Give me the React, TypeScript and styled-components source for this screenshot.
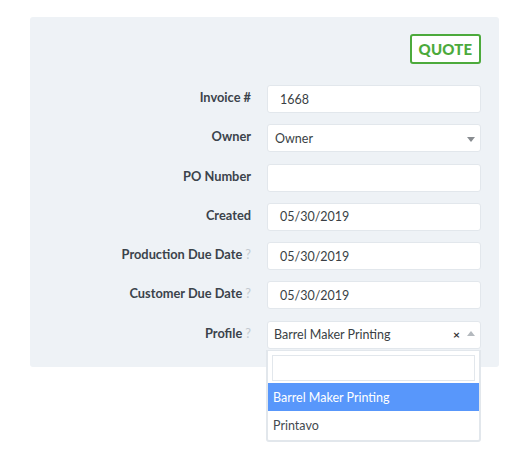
import React, { useState } from 'react';
import styled, { createGlobalStyle } from 'styled-components';

const GlobalStyle = createGlobalStyle`
	html, body {
		margin: 0;
		padding: 0;
		background: #ffffff;
		font-family: Lato, 'Liberation Sans', sans-serif;
	}
`;

const Page = styled.div`
	min-height: 100vh;
	box-sizing: border-box;
	padding: 17px 0 0 30px;
`;

const Panel = styled.div`
	position: relative;
	width: 469px;
	box-sizing: border-box;
	padding: 17px 18px 18px 0;
	background-color: #eef2f6;
	border-radius: 3px;
`;

const Toolbar = styled.div`
	display: flex;
	justify-content: flex-end;
	margin-bottom: 21px;
`;

const QuoteBadge = styled.button`
	width: 71px;
	height: 30px;
	box-sizing: border-box;
	border: 2px solid #4caa3c;
	border-radius: 3px;
	background: #ffffff;
	color: #4caa3c;
	font-family: Lato, 'Liberation Sans', sans-serif;
	font-weight: 900;
	font-size: 15px;
	letter-spacing: 0.2px;
	padding: 0;
`;

const Form = styled.div`
	display: grid;
	grid-template-columns: 1fr 214px;
	column-gap: 16px;
	row-gap: 11.3px;
`;

const Label = styled.label`
	display: flex;
	justify-content: flex-end;
	align-items: center;
	height: 28px;
	padding-bottom: 4px;
	box-sizing: border-box;
	font-size: 12.8px;
	font-weight: 700;
	color: #3b434b;
`;

const Hint = styled.span`
	margin-left: 3px;
	color: #c3c9cf;
	font-weight: 400;
`;

const Field = styled.div<{ $inset?: number }>`
	position: relative;
	height: 28px;
	box-sizing: border-box;
	display: flex;
	align-items: center;
	padding-left: ${(p) => p.$inset ?? 12}px;
	padding-right: 5px;
	background: #ffffff;
	border: 1px solid #e2e7ec;
	border-radius: 3px;
	font-size: 12.5px;
	color: #3a3f45;
`;

const Value = styled.span`
	flex: 1;
`;

const Caret = styled.span<{ $up?: boolean }>`
	width: 0;
	height: 0;
	border-left: 4px solid transparent;
	border-right: 4px solid transparent;
	${(p) =>
		p.$up
			? 'border-bottom: 5px solid #b4b9be; margin-top: -2px;'
			: 'border-top: 5px solid #888c90; margin-top: 2px;'}
`;

const Clear = styled.span`
	margin-right: 7px;
	font-size: 12px;
	font-weight: 700;
	color: #333;
	line-height: 1;
`;

const Dropdown = styled.div`
	position: absolute;
	left: -2px;
	right: -1px;
	top: 28px;
	background: #ffffff;
	border: 2px solid #e2e7ec;
	border-top: 1px solid #e2e7ec;
	border-radius: 0 0 3px 3px;
	z-index: 10;
`;

const SearchBox = styled.div`
	padding: 4px 4px 2px;
`;

const SearchInput = styled.input`
	display: block;
	width: 100%;
	height: 26px;
	box-sizing: border-box;
	border: 1px solid #e2e7ec;
	outline: none;
`;

const Option = styled.div<{ $active?: boolean }>`
	height: 28.5px;
	display: flex;
	align-items: center;
	padding-left: 5px;
	font-size: 12.5px;
	color: ${(p) => (p.$active ? '#ffffff' : '#444a50')};
	background: ${(p) => (p.$active ? '#5897fb' : 'transparent')};
`;

const rows = [
	{ label: 'Invoice #', value: '1668' },
	{ label: 'Owner', value: 'Owner', select: true },
	{ label: 'PO Number', value: '' },
	{ label: 'Created', value: '05/30/2019' },
	{ label: 'Production Due Date', value: '05/30/2019', hint: true },
	{ label: 'Customer Due Date', value: '05/30/2019', hint: true },
];

const profiles = ['Barrel Maker Printing', 'Printavo'];

export default function App() {
	const [profile, setProfile] = useState(profiles[0]);

	return (
		<Page>
			<GlobalStyle />
			<Panel>
				<Toolbar>
					<QuoteBadge type='button'>QUOTE</QuoteBadge>
				</Toolbar>
				<Form>
					{rows.map((row) => (
						<React.Fragment key={row.label}>
							<Label>
								{row.label}
								{row.hint && <Hint>?</Hint>}
							</Label>
							<Field $inset={row.select ? 7 : 12}>
								<Value>{row.value}</Value>
								{row.select && <Caret />}
							</Field>
						</React.Fragment>
					))}
					<Label>
						Profile<Hint>?</Hint>
					</Label>
					<Field $inset={6}>
						<Value>{profile}</Value>
						<Clear>×</Clear>
						<Caret $up />
						<Dropdown>
							<SearchBox>
								<SearchInput />
							</SearchBox>
							{profiles.map((p) => (
								<Option
									key={p}
									$active={p === profile}
									onClick={() => setProfile(p)}>
									{p}
								</Option>
							))}
						</Dropdown>
					</Field>
				</Form>
			</Panel>
		</Page>
	);
}
